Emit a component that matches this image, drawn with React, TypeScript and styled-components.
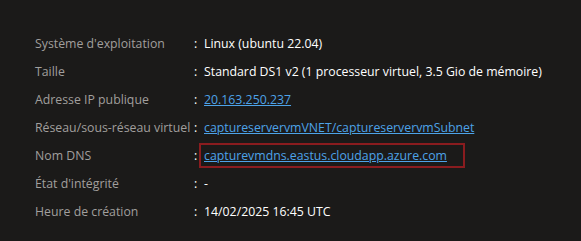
import React from "react";
import styled, { createGlobalStyle } from "styled-components";

const Global = createGlobalStyle`
  html, body { margin: 0; padding: 0; background: #1b1a19; }
  body { font-family: "Segoe UI", "Open Sans", "Noto Sans", sans-serif; }
`;

const Panel = styled.div`
  width: 581px;
  height: 241px;
  box-sizing: border-box;
  padding: 29px 0 0 35px;
  background: #1b1a19;
`;

const Grid = styled.div`
  display: grid;
  grid-template-columns: 159px auto 1fr;
  grid-auto-rows: 28px;
  align-items: center;
  font-size: 12.3px;
`;

const Label = styled.div`
  color: #a19f9d;
  white-space: nowrap;
`;

const Colon = styled.div`
  color: #ffffff;
  width: 10px;
`;

const Value = styled.div<{ $boxed?: boolean }>`
  color: #ffffff;
  white-space: nowrap;
  justify-self: start;
  ${(p) =>
    p.$boxed
      ? `margin-left: -5px; padding: 2px 16px 2px 3px; border: 2px solid #8a1c1f;`
      : ``}
`;

const Link = styled.a`
  color: #4da3e8;
  text-decoration: underline;
  cursor: pointer;
`;

type Row = { label: string; value: string; link?: boolean; boxed?: boolean };

const rows: Row[] = [
  { label: "Système d'exploitation", value: "Linux (ubuntu 22.04)" },
  { label: "Taille", value: "Standard DS1 v2 (1 processeur virtuel, 3.5 Gio de mémoire)" },
  { label: "Adresse IP publique", value: "20.163.250.237", link: true },
  { label: "Réseau/sous-réseau virtuel", value: "captureservervmVNET/captureservervmSubnet", link: true },
  { label: "Nom DNS", value: "capturevmdns.eastus.cloudapp.azure.com", link: true, boxed: true },
  { label: "État d'intégrité", value: "-" },
  { label: "Heure de création", value: "14/02/2025 16:45 UTC" },
];

export default function App() {
  return (
    <>
      <Global />
      <Panel>
        <Grid>
          {rows.map((r) => (
            <React.Fragment key={r.label}>
              <Label>{r.label}</Label>
              <Colon>:</Colon>
              <Value $boxed={r.boxed}>
                {r.link ? <Link>{r.value}</Link> : r.value}
              </Value>
            </React.Fragment>
          ))}
        </Grid>
      </Panel>
    </>
  );
}
